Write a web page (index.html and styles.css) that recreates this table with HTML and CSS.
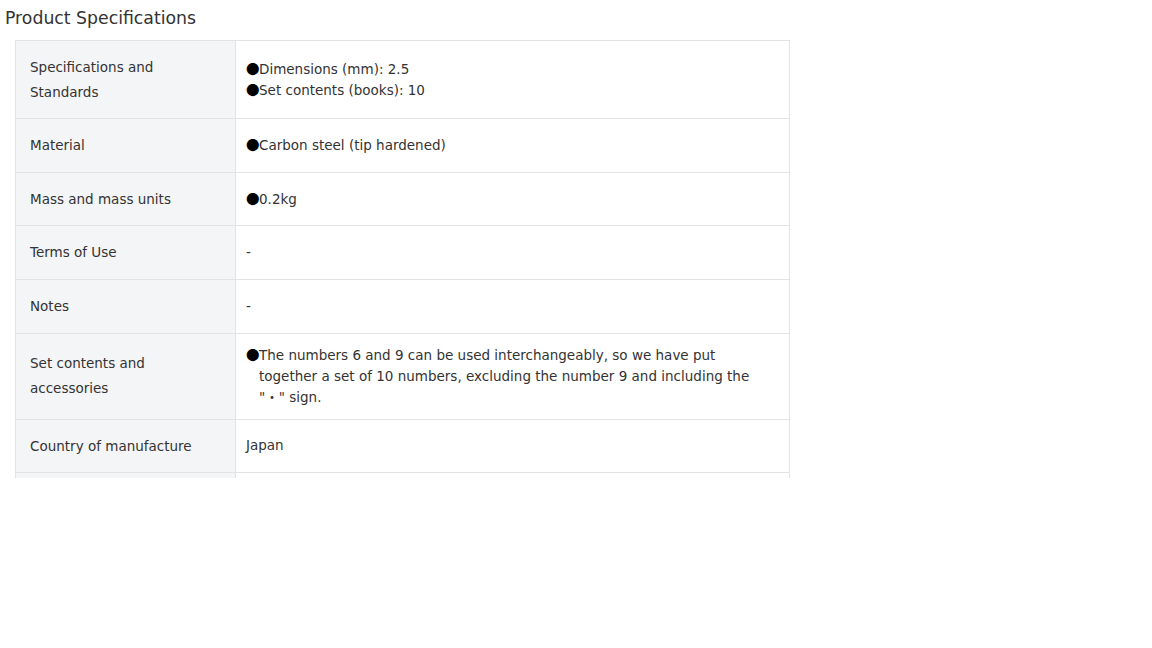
FILE: index.html
```html
<!DOCTYPE html>
<html>
<head>
<meta charset="utf-8">
<link rel="stylesheet" href="styles.css">
</head>
<body>
<div class="page">
  <h2 class="title">Product Specifications</h2>
  <table class="spec">
    <tr>
      <th>Specifications and Standards</th>
      <td><p class="item"><span class="dot">●</span>Dimensions (mm): 2.5</p><p class="item"><span class="dot">●</span>Set contents (books): 10</p></td>
    </tr>
    <tr>
      <th>Material</th>
      <td><p class="item"><span class="dot">●</span>Carbon steel (tip hardened)</p></td>
    </tr>
    <tr>
      <th>Mass and mass units</th>
      <td><p class="item"><span class="dot">●</span>0.2kg</p></td>
    </tr>
    <tr>
      <th>Terms of Use</th>
      <td>-</td>
    </tr>
    <tr>
      <th>Notes</th>
      <td>-</td>
    </tr>
    <tr>
      <th>Set contents and accessories</th>
      <td><p class="item"><span class="dot">●</span>The numbers 6 and 9 can be used interchangeably, so we have put together a set of 10 numbers, excluding the number 9 and including the "<span class="jp">・</span>" sign.</p></td>
    </tr>
    <tr>
      <th>Country of manufacture</th>
      <td>Japan</td>
    </tr>
    <tr>
      <th>&nbsp;</th>
      <td>&nbsp;</td>
    </tr>
  </table>
</div>
</body>
</html>
```
FILE: styles.css
```css
html, body {
  margin: 0;
  padding: 0;
  background: #fff;
}
.page {
  height: 478px;
  overflow: hidden;
  font-family: "DejaVu Sans", "Noto Sans CJK JP", sans-serif;
  color: #333;
}
.title {
  margin: 0;
  padding: 6px 5px 0;
  font-size: 17.3px;
  font-weight: normal;
  line-height: 24px;
  height: 34px;
  color: #333;
}
.spec {
  margin-left: 15px;
  width: 775px;
  border-collapse: collapse;
  font-size: 13.5px;
}
.spec th, .spec td {
  border: 1px solid #e3e3e3;
  vertical-align: middle;
  text-align: left;
  font-weight: normal;
}
.spec th {
  width: 191px;
  background: #f4f5f7;
  padding: 14px 14px;
  line-height: 24.6px;
}
.spec td {
  padding: 11px 22px 11px 10px;
  line-height: 21px;
}
.item {
  margin: 0;
  padding-left: 13px;
  text-indent: -13px;
}
.dot {
  display: inline-block;
  width: 13px;
  text-indent: 0;
  line-height: 1;
  font-family: "Noto Sans CJK JP", sans-serif;
  color: #000;
}
.jp {
  line-height: 1;
  font-family: "Noto Sans CJK JP", sans-serif;
}
```
